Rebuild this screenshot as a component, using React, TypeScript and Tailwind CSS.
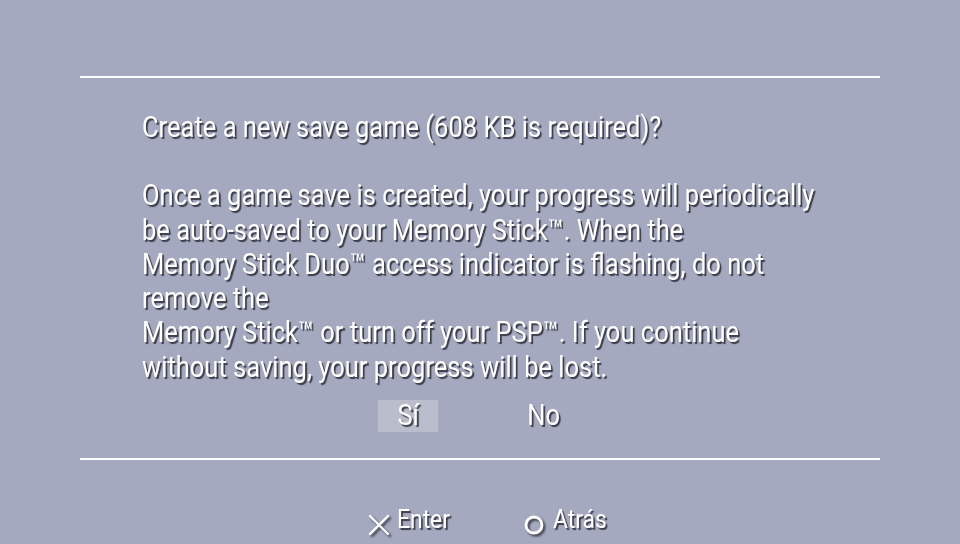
const shadow = '[text-shadow:2px_2px_1px_rgba(40,40,50,0.85)]';

const BODY = [
  'Once a game save is created, your progress will periodically',
  'be auto-saved to your Memory Stick™. When the',
  'Memory Stick Duo™ access indicator is flashing, do not',
  'remove the',
  'Memory Stick™ or turn off your PSP™. If you continue',
  'without saving, your progress will be lost.',
];

export default function App() {
  return (
    <div
      className="flex h-[544px] w-[960px] flex-col overflow-hidden bg-[#a4a9bf] text-white"
      style={{ fontFamily: 'Roboto, "Noto Sans", sans-serif' }}
    >
      <div className="mt-[76px] mx-[80px] h-[2px] bg-white" />

      <div className={`ml-[142px] mt-[32px] origin-left scale-x-[0.88] text-[29px] leading-[34.3px] ${shadow}`}>
        <div className="whitespace-nowrap">Create a new save game (608 KB is required)?</div>
        <div className="h-[34px]" />
        {BODY.map((l) => (
          <div key={l} className="whitespace-nowrap">{l}</div>
        ))}
      </div>

      <div className={`mt-[16px] flex h-[32px] text-[29px] ${shadow}`}>
        <div className="ml-[378px] flex w-[60px] items-center justify-center bg-[#babdcb]">
          <span className="scale-x-[0.88]">Sí</span>
        </div>
        <div className="ml-[86px] flex w-[40px] items-center justify-center">
          <span className="scale-x-[0.88]">No</span>
        </div>
      </div>

      <div className="mx-[80px] mt-[26px] h-[2px] bg-white" />

      <div className={`mt-[41px] flex items-center text-[26px] leading-[30px] ${shadow}`}>
        <svg className="ml-[367px] mt-[12px] [filter:drop-shadow(2px_2px_1px_rgba(40,40,50,0.85))]" width="24" height="24" viewBox="0 0 24 24">
          <path d="M3 3 L21 21 M21 3 L3 21" stroke="white" strokeWidth="2.4" strokeLinecap="round" />
        </svg>
        <span className="ml-[6px] origin-left scale-x-[0.88]">Enter</span>
        <svg className="ml-[66px] mt-[12px] [filter:drop-shadow(2px_2px_1px_rgba(40,40,50,0.85))]" width="22" height="22" viewBox="0 0 22 22">
          <circle cx="11" cy="11" r="8" fill="none" stroke="white" strokeWidth="2.8" />
        </svg>
        <span className="ml-[8px] origin-left scale-x-[0.88]">Atrás</span>
      </div>
    </div>
  );
}
